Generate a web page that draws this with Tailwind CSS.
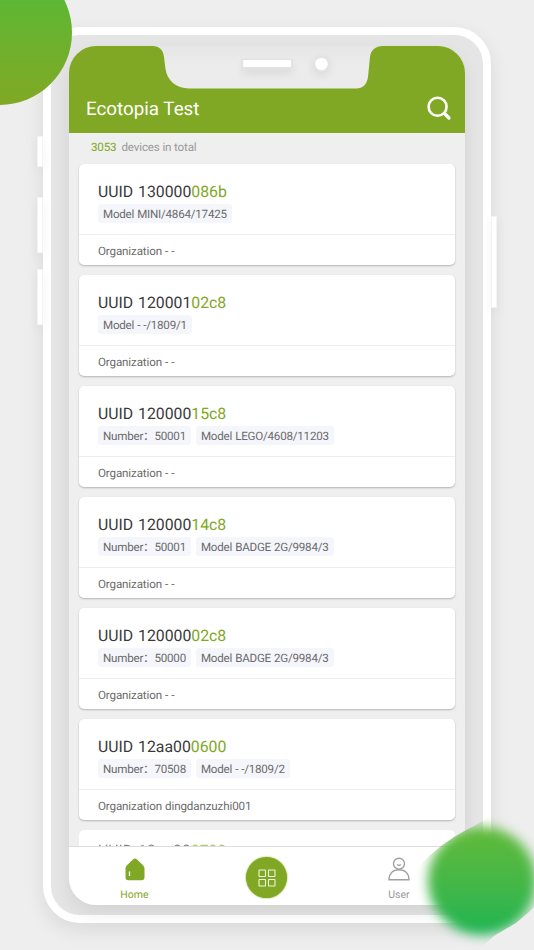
<!DOCTYPE html>
<html lang="en">
<head>
<meta charset="utf-8">
<title>Ecotopia Test</title>
<script src="https://cdn.jsdelivr.net/npm/@tailwindcss/browser@4"></script>
</head>
<body class="relative w-[534px] h-[950px] overflow-hidden bg-[#eeeeee] font-[Roboto,'Noto_Sans_CJK_SC',sans-serif] [text-rendering:geometricPrecision]">
<!-- side buttons -->
<div class="absolute left-[37px] top-[136px] w-[6px] h-[31px] bg-white border border-[#f3f3f3] shadow-[0_4px_12px_rgba(0,0,0,.06)]"></div>
<div class="absolute left-[37px] top-[197px] w-[6px] h-[56px] bg-white border border-[#f3f3f3] shadow-[0_4px_12px_rgba(0,0,0,.06)]"></div>
<div class="absolute left-[37px] top-[269px] w-[6px] h-[56px] bg-white border border-[#f3f3f3] shadow-[0_4px_12px_rgba(0,0,0,.06)]"></div>
<div class="absolute left-[491px] top-[216px] w-[6px] h-[92px] bg-white border border-[#f3f3f3] shadow-[0_4px_12px_rgba(0,0,0,.06)]"></div>

<!-- phone -->
<div class="ml-[43px] pt-[27px] w-[448px]">
<div class="w-[448px] h-[896px] rounded-[37px] border-8 border-white bg-[#e5e5e5] px-[18px] pt-[11px] shadow-[0_7px_20px_rgba(0,0,0,.09)]">
  <main class="relative w-[396px] h-[859px] rounded-[27px] overflow-hidden bg-[#efefef] flex flex-col shadow-[0_8px_18px_rgba(0,0,0,.08)]">
    <header class="relative h-[87px] shrink-0 bg-[#80a824] flex items-end justify-between pl-[17px] pr-[13px] text-white">
      <svg class="absolute left-0 top-0" width="396" height="43" viewBox="0 0 396 43">
        <defs><filter id="soft" x="-50%" y="-100%" width="200%" height="400%"><feGaussianBlur stdDeviation="5"/></filter>
        <linearGradient id="notch" x2="0" y2="1"><stop stop-color="#e6e6e6"/><stop offset=".45" stop-color="#ececec"/><stop offset="1" stop-color="#ebebeb"/></linearGradient></defs>
        <path d="M83 0C91 0 94 4 95 11L96.500 23C98 34 107 42.500 120 42.500H287C294 42.500 298 38 299 31L301 11C302 4 306 0 314 0Z" fill="url(#notch)"/>
        <rect x="173" y="18" width="51" height="10" fill="#000" opacity=".07" filter="url(#soft)"/>
        <circle cx="252" cy="21" r="9" fill="#000" opacity=".07" filter="url(#soft)"/>
        <rect x="172" y="12.500" width="52" height="10" rx="2" fill="#e3e3e3"/>
        <rect x="174" y="14" width="48" height="7" rx="1" fill="#fff"/>
        <circle cx="252.500" cy="18" r="8" fill="#e3e3e3"/>
        <circle cx="252.500" cy="18" r="6.200" fill="#fff"/>
      </svg>
      <h1 class="text-[18.8px] leading-[24px] mb-[12px]">Ecotopia Test</h1>
      <svg class="mb-[12px]" width="25" height="26" viewBox="0 0 25 26" fill="none" stroke="#fff" stroke-linecap="round"><circle cx="10.600" cy="11.700" r="9" stroke-width="2.600"/><path d="M17.500 18.500L22 23" stroke-width="3.200"/></svg>
    </header>
    <p class="h-[31px] shrink-0 pl-[22px] pt-[5px] text-[11.6px] tracking-[-0.15px] leading-[18px] text-[#999]"><span class="text-[#80a824] mr-[5px]">3053</span>devices in total</p>
    <section id="list" class="px-[10px] flex flex-col gap-[10px] h-[682px] overflow-hidden"></section>
    <nav class="h-[59px] shrink-0 bg-white border-t border-[#dcdcdc] grid grid-cols-3 text-[10.5px] leading-[14px]">
      <a class="flex flex-col items-center pt-[11px] pr-px text-[#80a824]">
        <svg width="20" height="23" viewBox="0 0 20 23"><path d="M8.200 1.200Q10 0 11.800 1.200L18 7.300Q19.500 8.700 19.500 10.500V19.500Q19.500 22.300 16.700 22.300H3.300Q.5 22.300.5 19.500V10.500Q.5 8.700 2 7.300Z" fill="#80a824"/><path d="M4.500 13.500V18" stroke="#fff" stroke-width="1.300"/></svg>
        <span class="mt-[7px]">Home</span>
      </a>
      <a class="flex justify-center pt-[10px] pr-px">
        <span class="size-[41px] rounded-full bg-[#80a824] flex items-center justify-center shadow-[0_0_2px_#80a824]">
          <svg width="18" height="18" viewBox="0 0 18 18" fill="none" stroke="#eef4df" stroke-width="1.100"><rect x="1" y="1" width="6.500" height="6.500" rx=".5"/><rect x="10.500" y="1" width="6.500" height="6.500" rx=".5"/><rect x="1" y="10.500" width="6.500" height="6.500" rx=".5"/><rect x="10.500" y="10.500" width="6.500" height="6.500" rx=".5"/></svg>
        </span>
      </a>
      <a class="flex flex-col items-center pt-[10px] text-[#999]">
        <svg width="22" height="24" viewBox="0 0 22 24" fill="none" stroke="#a0a0a0" stroke-width="1.400"><circle cx="11" cy="6.700" r="5.500"/><path d="M9.200 7.600Q11 9.200 12.800 7.600M1 22.700C1 16.500 5 12.700 11 12.700S21 16.500 21 22.700Z"/></svg>
        <span class="mt-[7px]">User</span>
      </a>
    </nav>
  </main>
</div>
</div>

<!-- decorative circles -->
<div class="absolute left-[-73px] top-[-40px] size-[145px] rounded-full bg-linear-to-b from-[#48bd38] to-[#80a824]"></div>
<div class="absolute left-[414px] top-[810px] w-[120px] h-[140px] [clip-path:polygon(0_60px,15px_46px,27px_36px,40px_27px,52px_20px,60px_16px,70px_10px,80px_0,120px_0,120px_97px,115px_102px,102px_113px,90px_120px,80px_126px,65px_140px,0_140px)]">
  <div class="absolute left-[14px] top-[17px] size-[108px] rounded-full bg-linear-to-b from-[#60ba38] to-[#18b452] blur-[6px]"></div>
</div>

<script>
const devices = [
  ["130000", "086b", ["Model MINI/4864/17425"], "- -"],
  ["120001", "02c8", ["Model - -/1809/1"], "- -"],
  ["120000", "15c8", ["Number：50001", "Model LEGO/4608/11203"], "- -"],
  ["120000", "14c8", ["Number：50001", "Model BADGE 2G/9984/3"], "- -"],
  ["120000", "02c8", ["Number：50000", "Model BADGE 2G/9984/3"], "- -"],
  ["12aa00", "0600", ["Number：70508", "Model - -/1809/2"], "dingdanzuzhi001"],
];
const title = (a, b) => `<h2 class="text-[15.8px] [word-spacing:1px] leading-[21px] text-[#3a3a3a]">UUID ${a}<span class="text-[#80a824]">${b}</span></h2>`;
document.getElementById("list").innerHTML = devices.map(([a, b, tags, org]) => `
<article class="h-[101px] shrink-0 rounded-[5px] bg-white shadow-[0_1px_2px_rgba(0,0,0,.25)]">
  <div class="h-[71px] border-b border-[#eeeeee] pl-[19px] pt-[17px]">
    ${title(a, b)}
    <div class="mt-[2px] flex gap-[5px]">${tags.map(t => `<span class="h-[19px] px-[5px] rounded-[3px] bg-[#f5f6fb] text-[11.6px] tracking-[-0.22px] [word-spacing:.4px] leading-[20px] text-[#6a6a6a] whitespace-nowrap">${t}</span>`).join("")}</div>
  </div>
  <p class="pl-[19px] pt-[7px] text-[11.6px] tracking-[-0.13px] [word-spacing:.4px] leading-[18px] text-[#6a6a6a]">Organization ${org}</p>
</article>`).join("") + `
<article class="h-[101px] shrink-0 rounded-[5px] bg-white pl-[19px] pt-[10px]"><div class="opacity-60">${title("12aa00", "0700")}</div></article>`;
</script>
</body>
</html>
